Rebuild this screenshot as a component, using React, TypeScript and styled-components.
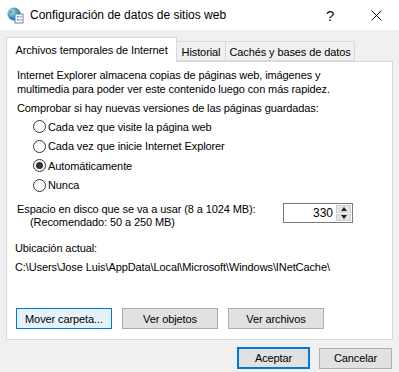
import React, { FC } from "react";
import styled, { createGlobalStyle } from "styled-components";

const GlobalStyle = createGlobalStyle`
	html, body {
		margin: 0;
		padding: 0;
		background: #f0f0f0;
	}
	* {
		box-sizing: border-box;
	}
`;

const FONT = `"Liberation Sans", Arial, sans-serif`;

const Window = styled.div`
	width: 399px;
	height: 372px;
	background: #f0f0f0;
	font-family: ${FONT};
	font-size: 11px;
	letter-spacing: -0.1px;
	color: #000;
	display: flex;
	flex-direction: column;
	overflow: hidden;
`;

const TitleBar = styled.div`
	height: 30px;
	background: #ffffff;
	display: flex;
	align-items: center;
	padding-left: 7px;
`;

const TitleText = styled.div`
	font-size: 12px;
	letter-spacing: 0;
	margin-left: 6px;
	flex: 1;
	color: #000;
`;

const TitleButton = styled.div<{ $width: number }>`
	width: ${(p) => p.$width}px;
	height: 30px;
	display: flex;
	align-items: center;
	justify-content: center;
	font-size: 15px;
	color: #111;
`;

const Body = styled.div`
	flex: 1;
	padding: 7px 7px 0 6px;
	display: flex;
	flex-direction: column;
`;

const TabRow = styled.div`
	display: flex;
	align-items: flex-end;
	height: 24px;
	position: relative;
	z-index: 1;
`;

const Tab = styled.div<{ $active?: boolean; $width: number }>`
	width: ${(p) => p.$width}px;
	height: ${(p) => (p.$active ? 25 : 20)}px;
	margin-bottom: ${(p) => (p.$active ? -1 : 0)}px;
	margin-left: ${(p) => (p.$active ? 0 : -1)}px;
	display: flex;
	align-items: center;
	justify-content: center;
	background: ${(p) => (p.$active ? "#ffffff" : "#f0f0f0")};
	border: 1px solid #d9d9d9;
	border-bottom: ${(p) => (p.$active ? "none" : "1px solid #d9d9d9")};
	padding-top: ${(p) => (p.$active ? 0 : 1)}px;
	white-space: nowrap;
`;

const Panel = styled.div`
	height: 279px;
	width: 387px;
	background: #ffffff;
	border: 1px solid #d9d9d9;
	padding: 6px 8px 10px 10px;
	display: flex;
	flex-direction: column;
`;

const Para = styled.div`
	line-height: 14px;
`;

const Label = styled.div<{ $top: number; $indent?: number }>`
	margin-top: ${(p) => p.$top}px;
	margin-left: ${(p) => p.$indent || 0}px;
	line-height: 14px;
	white-space: nowrap;
`;

const RadioList = styled.div`
	display: flex;
	flex-direction: column;
	padding-left: 16px;
	margin-top: 2px;
`;

const RadioRow = styled.div`
	display: flex;
	align-items: center;
	height: 19.5px;
`;

const RadioCircle = styled.span<{ $checked?: boolean }>`
	width: 13px;
	height: 13px;
	border-radius: 50%;
	border: 1px solid #333;
	background: #fff;
	margin-right: 2px;
	display: flex;
	align-items: center;
	justify-content: center;
	&::after {
		content: "";
		width: 7px;
		height: 7px;
		border-radius: 50%;
		background: ${(p) => (p.$checked ? "#333" : "transparent")};
	}
`;

const DiskRow = styled.div`
	display: flex;
	align-items: flex-start;
	margin-top: 8px;
`;

const DiskLabels = styled.div`
	flex: 0 0 266px;
	line-height: 13px;
	white-space: nowrap;
`;

const Indented = styled.div`
	padding-left: 13px;
`;

const SpinBox = styled.div`
	width: 70px;
	height: 20px;
	border: 1px solid #7a7a7a;
	background: #fff;
	display: flex;
	align-items: stretch;
	font-size: 12px;
	letter-spacing: 0;
`;

const SpinValue = styled.div`
	flex: 1;
	text-align: right;
	padding-right: 3px;
	line-height: 18px;
`;

const SpinButtons = styled.div`
	width: 16px;
	display: flex;
	flex-direction: column;
	padding: 1px 1px 1px 0;
	gap: 1px;
`;

const SpinArrow = styled.div<{ $up?: boolean }>`
	flex: 1;
	background: #e5e5e5;
	border: 1px solid #cfcfcf;
	display: flex;
	align-items: center;
	justify-content: center;
	&::after {
		content: "";
		border-left: 3px solid transparent;
		border-right: 3px solid transparent;
		${(p) => (p.$up ? "border-bottom: 4px solid #222;" : "border-top: 4px solid #222;")}
	}
`;

const ButtonRow = styled.div<{ $gap: number }>`
	display: flex;
	gap: ${(p) => p.$gap}px;
`;

const Button = styled.div<{ $width: number; $focus?: "soft" | "strong" }>`
	width: ${(p) => p.$width}px;
	height: ${(p) => (p.$focus === "strong" ? 22 : 21)}px;
	display: flex;
	align-items: center;
	justify-content: center;
	background: ${(p) => (p.$focus === "soft" ? "#e5f1fb" : "#e1e1e1")};
	border: ${(p) =>
		p.$focus === "strong"
			? "2px solid #0078d7"
			: p.$focus === "soft"
			? "1px solid #0078d7"
			: "1px solid #adadad"};
	white-space: nowrap;
`;

const PanelButtons = styled(ButtonRow)`
	margin-top: auto;
	margin-left: -1px;
`;

const Footer = styled(ButtonRow)`
	justify-content: flex-end;
	align-items: center;
	margin-top: 7px;
`;

const GlobeIcon: FC = () => (
	<svg width="17" height="17" viewBox="0 0 17 17">
		<defs>
			<radialGradient id="g" cx="0.35" cy="0.35" r="0.7">
				<stop offset="0" stopColor="#bfe6ff" />
				<stop offset="0.6" stopColor="#3a8fd8" />
				<stop offset="1" stopColor="#1c5fa8" />
			</radialGradient>
		</defs>
		<circle cx="7" cy="7" r="6.5" fill="url(#g)" />
		<path d="M3 4 Q5 3 6 5 Q5 7 3 7 Z M8 2 Q11 3 11 6 Q9 6 8 4 Z" fill="#5cb84a" />
		<rect x="8" y="7" width="8" height="9" fill="#fff" stroke="#6d7f95" strokeWidth="1" />
		<rect x="10" y="9" width="1.5" height="1.5" fill="#3a78c4" />
		<rect x="12" y="9.5" width="3" height="0.8" fill="#6d7f95" />
		<rect x="10" y="12" width="1.5" height="1.5" fill="#3a78c4" />
		<rect x="12" y="12.5" width="3" height="0.8" fill="#6d7f95" />
	</svg>
);

const CloseIcon: FC = () => (
	<svg width="11" height="11" viewBox="0 0 11 11">
		<path d="M0.5 0.5 L10.5 10.5 M10.5 0.5 L0.5 10.5" stroke="#111" strokeWidth="1" />
	</svg>
);

const radios = [
	{ label: "Cada vez que visite la página web" },
	{ label: "Cada vez que inicie Internet Explorer" },
	{ label: "Automáticamente", checked: true },
	{ label: "Nunca" },
];

export default function App() {
	return (
		<Window>
			<GlobalStyle />
			<TitleBar>
				<GlobeIcon />
				<TitleText>Configuración de datos de sitios web</TitleText>
				<TitleButton $width={46}>?</TitleButton>
				<TitleButton $width={46}>
					<CloseIcon />
				</TitleButton>
			</TitleBar>
			<Body>
				<TabRow>
					<Tab $active $width={171}>
						Archivos temporales de Internet
					</Tab>
					<Tab $width={50}>Historial</Tab>
					<Tab $width={130}>Cachés y bases de datos</Tab>
				</TabRow>
				<Panel>
					<Para>
						Internet Explorer almacena copias de páginas web, imágenes y
						<br />
						multimedia para poder ver este contenido luego con más rapidez.
					</Para>
					<Label $top={5}>
						Comprobar si hay nuevas versiones de las páginas guardadas:
					</Label>
					<RadioList>
						{radios.map((r) => (
							<RadioRow key={r.label}>
								<RadioCircle $checked={r.checked} />
								{r.label}
							</RadioRow>
						))}
					</RadioList>
					<DiskRow>
						<DiskLabels>
							Espacio en disco que se va a usar (8 a 1024 MB):
							<Indented>(Recomendado: 50 a 250 MB)</Indented>
						</DiskLabels>
						<SpinBox>
							<SpinValue>330</SpinValue>
							<SpinButtons>
								<SpinArrow $up />
								<SpinArrow />
							</SpinButtons>
						</SpinBox>
					</DiskRow>
					<Label $top={12} $indent={-2}>
						Ubicación actual:
					</Label>
					<Label $top={5} $indent={-2}>
						C:\Users\Jose Luis\AppData\Local\Microsoft\Windows\INetCache\
					</Label>
					<PanelButtons $gap={10}>
						<Button $width={96} $focus="soft">
							Mover carpeta...
						</Button>
						<Button $width={96}>Ver objetos</Button>
						<Button $width={96}>Ver archivos</Button>
					</PanelButtons>
				</Panel>
				<Footer $gap={9}>
					<Button $width={73} $focus="strong">
						Aceptar
					</Button>
					<Button $width={73}>Cancelar</Button>
				</Footer>
			</Body>
		</Window>
	);
}
